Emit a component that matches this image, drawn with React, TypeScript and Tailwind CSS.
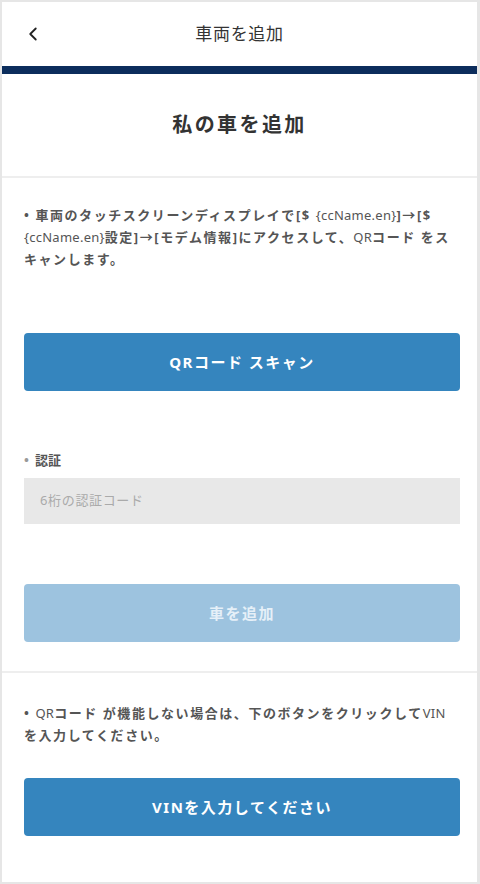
import { ChevronLeft } from 'lucide-react';

const font = { fontFamily: '"Noto Sans", "Noto Sans CJK JP", sans-serif' };

const Latin = ({ children }: { children: React.ReactNode }) => (
  <span className="font-normal tracking-[0.02em]">{children}</span>
);

export default function App() {
  return (
    <div
      className="w-[480px] h-[884px] bg-white border-2 border-r-[3px] border-[#e6e6e6] flex flex-col overflow-hidden"
      style={font}
    >
      {/* header */}
      <div className="relative h-[64px] flex items-center justify-center shrink-0">
        <ChevronLeft className="absolute left-[20px] top-[21px] w-[22px] h-[22px] text-[#222]" strokeWidth={2} />
        <div className="text-[17px] text-[#333] tracking-[0.04em]">車両を追加</div>
      </div>
      <div className="h-[8px] bg-[#0c2d5c] shrink-0" />

      <div className="h-[102px] flex items-center justify-center shrink-0">
        <div className="text-[20px] font-bold text-[#333] tracking-[0.12em]">私の車を追加</div>
      </div>
      <div className="h-[2px] bg-[#eeeeee] shrink-0" />

      {/* QR section */}
      <div className="pl-[22px] pr-[17px] pt-[26px] pb-[29px] flex flex-col">
        <p className="text-[13px] leading-[22px] font-bold text-[#555] tracking-[0.12em]">
          • 車両のタッチスクリーンディスプレイで[$ <Latin>{'{ccName.en}'}</Latin>]→[$ <Latin>{'{ccName.en}'}</Latin>設定]→[モデム情報]にアクセスして、<Latin>QR</Latin>コード をスキャンします。
        </p>
        <button className="mt-[63px] h-[58px] rounded-[4px] bg-[#3585be] text-white text-[15px] font-bold tracking-[0.1em]">
          QRコード スキャン
        </button>

        <div className="mt-[59px] text-[13px] leading-[20px] font-bold text-[#555]">
          <span className="text-[#999] mr-[6px]">•</span>認証
        </div>
        <div className="mt-[8px] h-[46px] bg-[#e8e8e8] flex items-center px-[16px] text-[13px] text-[#aaa] tracking-[0.05em]">
          6桁の認証コード
        </div>

        <button className="mt-[60px] h-[58px] rounded-[4px] bg-[#9dc3df] text-[#e6f0f8] text-[15px] font-bold tracking-[0.1em]">
          車を追加
        </button>
      </div>
      <div className="h-[2px] bg-[#eeeeee] shrink-0" />

      {/* VIN section */}
      <div className="pl-[22px] pr-[17px] pt-[29px] flex flex-col">
        <p className="text-[13px] leading-[22px] font-bold text-[#555] tracking-[0.12em] pr-[12px]">
          • <Latin>QR</Latin>コード が機能しない場合は、下のボタンをクリックして<Latin>VIN</Latin>を入力してください。
        </p>
        <button className="mt-[32px] h-[58px] rounded-[4px] bg-[#3585be] text-white text-[15px] font-bold tracking-[0.1em]">
          VINを入力してください
        </button>
      </div>
    </div>
  );
}
